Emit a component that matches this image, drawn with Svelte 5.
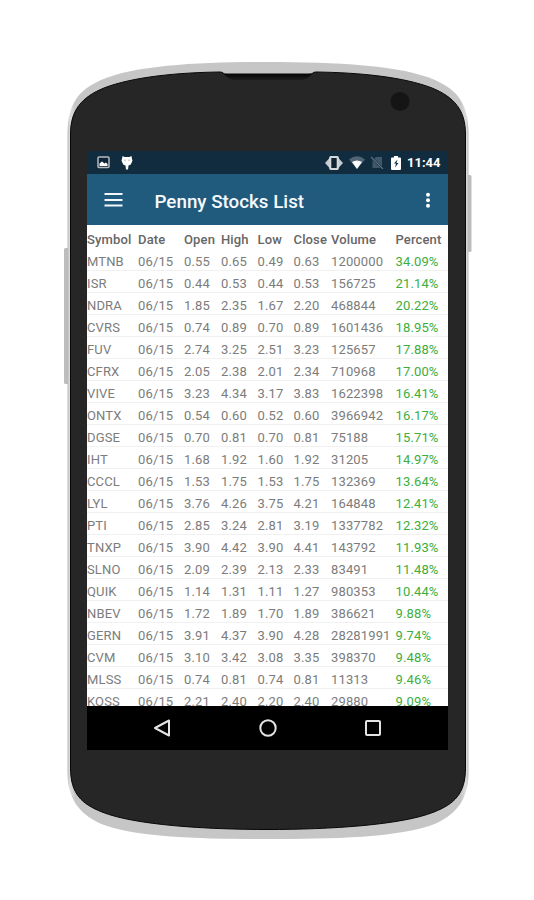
<script lang="ts">
	const columns = ['Symbol', 'Date', 'Open', 'High', 'Low', 'Close', 'Volume', 'Percent'];

	const stocks = [
		['MTNB', '06/15', '0.55', '0.65', '0.49', '0.63', '1200000', '34.09%'],
		['ISR', '06/15', '0.44', '0.53', '0.44', '0.53', '156725', '21.14%'],
		['NDRA', '06/15', '1.85', '2.35', '1.67', '2.20', '468844', '20.22%'],
		['CVRS', '06/15', '0.74', '0.89', '0.70', '0.89', '1601436', '18.95%'],
		['FUV', '06/15', '2.74', '3.25', '2.51', '3.23', '125657', '17.88%'],
		['CFRX', '06/15', '2.05', '2.38', '2.01', '2.34', '710968', '17.00%'],
		['VIVE', '06/15', '3.23', '4.34', '3.17', '3.83', '1622398', '16.41%'],
		['ONTX', '06/15', '0.54', '0.60', '0.52', '0.60', '3966942', '16.17%'],
		['DGSE', '06/15', '0.70', '0.81', '0.70', '0.81', '75188', '15.71%'],
		['IHT', '06/15', '1.68', '1.92', '1.60', '1.92', '31205', '14.97%'],
		['CCCL', '06/15', '1.53', '1.75', '1.53', '1.75', '132369', '13.64%'],
		['LYL', '06/15', '3.76', '4.26', '3.75', '4.21', '164848', '12.41%'],
		['PTI', '06/15', '2.85', '3.24', '2.81', '3.19', '1337782', '12.32%'],
		['TNXP', '06/15', '3.90', '4.42', '3.90', '4.41', '143792', '11.93%'],
		['SLNO', '06/15', '2.09', '2.39', '2.13', '2.33', '83491', '11.48%'],
		['QUIK', '06/15', '1.14', '1.31', '1.11', '1.27', '980353', '10.44%'],
		['NBEV', '06/15', '1.72', '1.89', '1.70', '1.89', '386621', '9.88%'],
		['GERN', '06/15', '3.91', '4.37', '3.90', '4.28', '28281991', '9.74%'],
		['CVM', '06/15', '3.10', '3.42', '3.08', '3.35', '398370', '9.48%'],
		['MLSS', '06/15', '0.74', '0.81', '0.74', '0.81', '11313', '9.46%'],
		['KOSS', '06/15', '2.21', '2.40', '2.20', '2.40', '29880', '9.09%']
	];
</script>

<div class="stage">
	<!-- Phone body, drawn behind the screen -->
	<svg class="phone" viewBox="0 0 534 900" aria-hidden="true">
		<defs>
			<linearGradient id="rim" x1="0" x2="1" y1="0" y2="0">
				<stop offset="0" stop-color="#b9b9b9" />
				<stop offset="0.006" stop-color="#dedede" />
				<stop offset="0.02" stop-color="#c6c6c6" />
				<stop offset="0.98" stop-color="#c6c6c6" />
				<stop offset="0.994" stop-color="#dedede" />
				<stop offset="1" stop-color="#b9b9b9" />
			</linearGradient>
			<linearGradient id="speaker" x1="0" x2="0" y1="0" y2="1">
				<stop offset="0" stop-color="#060606" />
				<stop offset="1" stop-color="#1d1d1d" />
			</linearGradient>
		</defs>
		<rect x="64" y="248" width="6" height="136" rx="1.5" fill="#bdbdbd" />
		<rect x="466" y="175" width="5.5" height="77" rx="1.5" fill="#bdbdbd" />
		<path
			d="M67.5 134C67.5 103 79 90 101 80C136 65 200 62 268 62S400 65 435 80C457 90 468.5 103 468.5 134V772C468.5 799 457 813 437 823C402 838 330 839 268 839S134 838 99 823C79 813 67.5 799 67.5 772Z"
			fill="url(#rim)"
		/>
		<path
			d="M70.5 134C70.5 110 82 97 104 88C132 77 178 72.5 220 72Q222 72 223 73T226 74H309Q312 74 313 73T316 72C359 72.5 404 77 432 88C454 97 465.5 110 465.5 134V768C465.5 794 454 804 434 812C402 825 330 829.5 268 829.5S134 825 102 812C82 804 70.5 794 70.5 768Z"
			fill="#262626"
			stroke="#080808"
		/>
		<path d="M224 74H312Q307 80 300 80H236Q229 80 224 74Z" fill="url(#speaker)" />
		<circle cx="400" cy="101.5" r="9.5" fill="#151515" />
	</svg>

	<div class="screen">
		<div class="status-bar">
			<svg class="image-icon" width="13" height="13" viewBox="0 0 13 13">
				<rect x="1" y="1" width="11" height="10.5" rx="1" fill="#0f2336" stroke="#b5bbc0" stroke-width="1.5" />
				<path d="M2.5 10V7.5L5 5.5L7.5 7.5L9 6.5L10.5 8V10Z" fill="#fff" />
			</svg>
			<svg class="bug-icon" width="12" height="14" viewBox="0 0 12 14">
				<path d="M1.5 0L3.5 1H8.5L10.5 0L11 3L11.5 4.5L10.5 7Q10 9 7.5 9.5L7 13.5H5L4.5 9.5Q2 9 1.5 7L0.5 4.5L1 3Z" fill="#fff" />
				<path d="M4 3.5V5M8 3.5V5" stroke="#9daab4" />
			</svg>
			<svg class="vibrate-icon" width="18" height="14" viewBox="0 0 18 14">
				<path d="M0 7L5 1.5V12.5ZM18 7L13 1.5V12.5Z" fill="#c5cbd0" />
				<rect x="5.2" y="1" width="7.6" height="12" rx="1" fill="#102434" stroke="#d4d8db" stroke-width="2.2" />
			</svg>
			<svg class="wifi-icon" width="16" height="13" viewBox="0 0 16 13">
				<path d="M0 3.5Q8 -3 16 3.5L8 13Z" fill="#506474" />
				<path d="M3 6Q8 3 13 6L8 13Z" fill="#fff" />
			</svg>
			<svg class="sim-icon" width="14" height="13" viewBox="0 0 14 13">
				<path d="M2.5 4.5L6 1H12V12H2.5Z" fill="#41576a" />
				<path d="M1 1L13 13" stroke="#122c3f" stroke-width="2.4" />
				<path d="M1 1L13 13" stroke="#60727f" stroke-width="1.2" />
			</svg>
			<svg class="battery-icon" width="10" height="14" viewBox="0 0 10 14">
				<path d="M3 0H7V1.5H9Q10 1.5 10 2.5V13Q10 14 9 14H1Q0 14 0 13V2.5Q0 1.5 1 1.5H3Z" fill="#fff" />
				<path d="M6.5 3.5L3 7.5H5L4 11.5L7.5 7H5.5Z" fill="#122c3f" />
			</svg>
			<span class="clock">11:44</span>
		</div>

		<header class="app-bar">
			<svg width="19" height="15" viewBox="0 0 19 15">
				<path d="M0.5 2H18.5M0.5 8H18.5M0.5 13.5H18.5" stroke="#f5f8fa" stroke-width="2" />
			</svg>
			<h1>Penny Stocks List</h1>
			<svg width="6" height="18" viewBox="0 0 6 18">
				<circle cx="3" cy="3.8" r="2" fill="#fff" />
				<circle cx="3" cy="9.3" r="2" fill="#fff" />
				<circle cx="3" cy="14.8" r="2" fill="#fff" />
			</svg>
		</header>

		<main class="list">
			<div class="row head">
				{#each columns as column}
					<span>{column}</span>
				{/each}
			</div>
			{#each stocks as stock}
				<div class="row">
					{#each stock as value, i}
						<span class:percent={i === 7}>{value}</span>
					{/each}
				</div>
			{/each}
		</main>

		<nav class="nav-bar">
			<svg width="20" height="20" viewBox="0 0 20 20">
				<path d="M17 2.5V17.5L3 10Z" />
			</svg>
			<svg width="20" height="20" viewBox="0 0 20 20">
				<circle cx="10" cy="10" r="7.7" />
			</svg>
			<svg width="20" height="20" viewBox="0 0 20 20">
				<rect x="3" y="3" width="14" height="14" rx="1" />
			</svg>
		</nav>
	</div>
</div>

<style>
	:global(body) {
		background: #fff;
	}

	.stage {
		position: relative;
		box-sizing: border-box;
		width: 534px;
		height: 900px;
		padding: 151px 86px 150px 87px;
		font-family: Roboto, 'Liberation Sans', sans-serif;
	}

	.phone {
		position: absolute;
		inset: 0;
		width: 534px;
		height: 900px;
	}

	.screen {
		position: relative;
		display: flex;
		flex-direction: column;
		height: 599px;
		background: #000;
		overflow: hidden;
	}

	.status-bar {
		display: flex;
		align-items: center;
		flex: 0 0 23px;
		padding: 0 7px 0 10px;
		background: #122c3f;
	}

	.bug-icon {
		margin-left: 11px;
	}

	.vibrate-icon {
		margin-left: auto;
	}

	.wifi-icon {
		margin-left: 6px;
	}

	.sim-icon {
		margin-left: 5px;
	}

	.battery-icon {
		margin-left: 7px;
	}

	.clock {
		width: 34px;
		margin-left: 6px;
		color: #fff;
		font-size: 13px;
		font-weight: 700;
		white-space: nowrap;
	}

	.app-bar {
		display: flex;
		align-items: center;
		flex: 0 0 51px;
		padding: 0 17px 0 17px;
		background: #205b7e;
	}

	h1 {
		flex: 1;
		margin: 4px 0 0 31.5px;
		color: #f7fafc;
		font-size: 18.8px;
		font-weight: 500;
		line-height: 24px;
	}

	.list {
		flex: 0 0 481px;
		padding-top: 2px;
		box-sizing: border-box;
		background: #fff;
		overflow: hidden;
	}

	.row {
		display: grid;
		grid-template-columns: 51px 46px 37px 36.5px 36px 37.5px 64.5px 1fr;
		box-sizing: border-box;
		height: 22px;
		border-bottom: 1px solid #f1f1f1;
		color: #7c7c7c;
		font-size: 13px;
		line-height: 26px;
		letter-spacing: 0.14px;
		white-space: nowrap;
	}

	.row.head {
		border-bottom: none;
		color: #666;
		font-weight: 500;
	}

	.row .percent {
		color: #3cae3c;
	}

	.nav-bar {
		display: flex;
		align-items: center;
		justify-content: space-between;
		flex: 1;
		padding: 0 65px;
	}

	.nav-bar svg {
		fill: none;
		stroke: #e3e3e3;
		stroke-width: 2;
		stroke-linejoin: round;
	}
</style>
